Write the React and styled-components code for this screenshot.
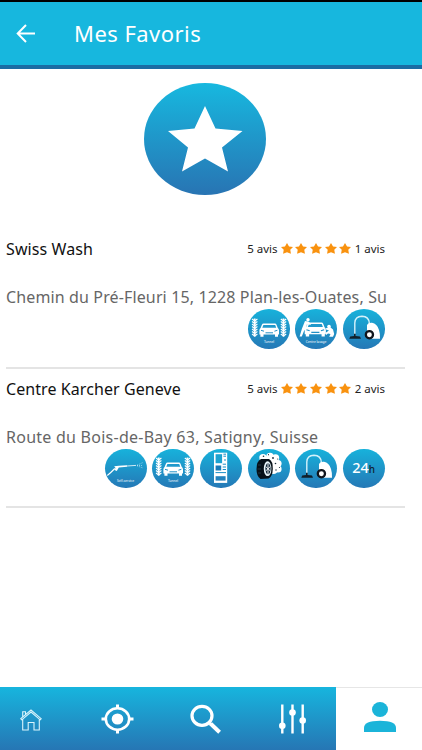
import React from 'react';
import styled, { createGlobalStyle } from 'styled-components';

const STAR = '75.5,35.5 86,58 113,60.5 92.5,77 98.5,101 75.5,88 52.5,101 58.5,77 38.5,60.5 65,58';

const favoris = [
  {
    id: 1,
    name: 'Swiss Wash',
    nameSpacing: 0.1,
    address: 'Chemin du Pré-Fleuri 15, 1228 Plan-les-Ouates, Su',
    addressSpacing: 0.13,
    avis: '1 avis',
    services: ['tunnel', 'lavage', 'aspirateur'],
  },
  {
    id: 2,
    name: 'Centre Karcher Geneve',
    nameSpacing: 0.08,
    address: 'Route du Bois-de-Bay 63, Satigny, Suisse',
    addressSpacing: 0.25,
    avis: '2 avis',
    services: ['self', 'tunnel', 'distributeur', 'pneu', 'aspirateur', 'h24'],
  },
];

function Car() {
  return (
    <g>
      <path d="M14 15.5Q14.4 14.6 15.5 14.6H27Q28 14.6 28.4 15.5L29.8 19Q31 19.8 31 21.5V25.5H30V27.7H27V25.5H15.5V27.7H12.4V25.5H11.4V21.5Q11.4 19.8 12.6 19Z" fill="#fff" />
      <path d="M15.4 16H27.2L28.2 18.8H14.3Z" fill="#2099cb" />
      <path d="M13 21.3L16 22.2M29.4 21.3L26.4 22.2M17.5 23.8H25" stroke="#2390c5" strokeWidth="1" />
    </g>
  );
}

function Brush({ x }) {
  return (
    <g stroke="#fff" fill="none">
      <path d={`M${x} 9.5V27.5`} strokeWidth="1.8" />
      <path
        d={`M${x - 2.7} 10L${x} 12L${x + 2.7} 10M${x - 2.7} 12.5L${x} 14.5L${x + 2.7} 12.5M${x - 2.7} 15L${x} 17L${x + 2.7} 15M${x - 2.7} 17.5L${x} 19.5L${x + 2.7} 17.5M${x - 2.7} 20L${x} 22L${x + 2.7} 20M${x - 2.7} 22.5L${x} 24.5L${x + 2.7} 22.5M${x - 2.7} 25L${x} 27L${x + 2.7} 25`}
        strokeWidth="1.1"
      />
    </g>
  );
}

function ServiceIcon({ type }) {
  switch (type) {
    case 'tunnel':
      return (
        <Drawing viewBox="0 0 42 40">
          <Brush x={6.7} />
          <Car />
          <Brush x={35.5} />
          <Caption x="21" y="34">Tunnel</Caption>
        </Drawing>
      );
    case 'lavage':
      return (
        <Drawing viewBox="0 0 42 40">
          <g transform="translate(-2.6 -2.3) scale(1.08)">
            <Car />
          </g>
          <g fill="#fff">
            <circle cx="13" cy="10.7" r="1.7" />
            <path d="M10 12L13 12.4L16 14.5L15.5 16L12 15L11 19.5L9 22L6.8 27.5H4.6L7 19.5Z" />
            <circle cx="34" cy="17.5" r="1.8" />
            <path d="M35 18L38 20.5L39.2 25L38 27.7H34.2L35.5 25L33 24.5L31 26V23.5L34 21.5L31 20.5V19.2Z" />
          </g>
          <Caption x="21" y="34">Centre lavage</Caption>
        </Drawing>
      );
    case 'aspirateur':
      return (
        <Drawing viewBox="0 0 42 40">
          <path d="M11.8 27V14Q12 7.3 19 7.2Q26 7.3 26.4 14.5" fill="none" stroke="#d5f2fb" strokeWidth="1.4" />
          <path d="M24 16Q25 13.5 29 13.8Q34 14.5 36 21Q37.3 25 37 29.7H29L24 24Z" fill="#fff" />
          <path d="M6.3 29.8L7.2 27.5L11 27V24.8H12.7V27L17 27.5L18 29.8Z" fill="#10202c" />
          <circle cx="26.4" cy="25.7" r="3.6" fill="#fff" stroke="#10151c" strokeWidth="2.3" />
        </Drawing>
      );
    case 'self':
      return (
        <Drawing viewBox="0 0 42 40">
          <path d="M2.3 27.5Q6 24.5 9.8 20.5" fill="none" stroke="#fff" strokeWidth="1.1" />
          <path d="M9.2 18.2L13.8 17.7L22 17.3V18.7L13.8 19.5L11.8 23L9.4 22L10.5 20Z" fill="#fff" />
          <path d="M22 18L31 17.4" stroke="#fff" strokeWidth=".8" />
          <path d="M32 17.2L38 14.5M32 17.5H38M32 17.8L38 20" stroke="#d5f2fb" strokeWidth=".6" strokeDasharray="1 1" />
          <Caption x="20.5" y="33.7">Self-service</Caption>
        </Drawing>
      );
    case 'distributeur':
      return (
        <Drawing viewBox="0 0 42 40">
          <rect x="14" y="4.7" width="13.2" height="30.2" fill="#fff" />
          <rect x="15.6" y="6.2" width="6.5" height="9" fill="#1da3d1" />
          <rect x="15.6" y="17.5" width="5.6" height="5" fill="#197bb8" />
          <path d="M23.4 6.2H26M23.4 8.2H26M24 12H26M22.7 16.2H26M22.7 19H26M22.7 21.5H26M15.5 24.6H26" stroke="#1b8fc7" strokeWidth="1" />
          <rect x="15.6" y="28.2" width="10" height="4.4" fill="#2482bd" />
        </Drawing>
      );
    case 'pneu':
      return (
        <Drawing viewBox="0 0 42 40">
          <g fill="#fff">
            <circle cx="15" cy="9.8" r="3.7" />
            <circle cx="22" cy="8.5" r="3.7" />
            <circle cx="27.5" cy="10" r="3.7" />
            <circle cx="30" cy="15.5" r="3.6" />
            <circle cx="30" cy="21" r="3.6" />
            <circle cx="25.5" cy="21.5" r="4.5" />
            <circle cx="22" cy="14" r="7" />
          </g>
          <path d="M13 11H21Q25 13 24.8 21Q24.5 29 20.5 30.5L12.5 31Q8.5 28.5 8.5 21Q8.6 13 13 11Z" fill="#071018" />
          <ellipse cx="19.6" cy="20.7" rx="3.8" ry="7.4" fill="#e9f6fb" />
          <ellipse cx="20" cy="20.7" rx="2.6" ry="5.6" fill="#13293a" />
          <path d="M20 15V26.5M17.6 18.5L22.4 23M17.6 23L22.4 18.5" stroke="#fff" strokeWidth=".9" />
          <path d="M10 17H13M9.5 21H13M10 25H13" stroke="#34505f" strokeWidth=".6" />
          <g fill="#172b38">
            <circle cx="15.5" cy="8.3" r=".8" />
            <circle cx="20.5" cy="6.7" r=".6" />
            <circle cx="25" cy="10" r=".9" />
            <circle cx="29.7" cy="11" r=".6" />
            <circle cx="27.5" cy="15.5" r=".8" />
            <circle cx="31.5" cy="19.5" r=".6" />
            <circle cx="28" cy="22" r=".7" />
          </g>
        </Drawing>
      );
    default:
      return <Hours>24<small>h</small></Hours>;
  }
}

function Stars() {
  return (
    <StarRow>
      {[0, 1, 2, 3, 4].map((i) => (
        <svg key={i} width="12" height="11" viewBox="0 0 22 22" preserveAspectRatio="none">
          <path d="M11 0L14.7 6.8L22 8.2L17 13.7L18.2 21.5L11 18.3L3.8 21.5L5 13.7L0 8.2L7.3 6.8Z" fill="#f9920f" />
        </svg>
      ))}
    </StarRow>
  );
}

function Favori({ item }) {
  return (
    <Item>
      <ItemHead>
        <Line $color="#111" $spacing={item.nameSpacing}>{item.name}</Line>
        <Rating>
          <span>5 avis</span>
          <Stars />
          <span>{item.avis}</span>
        </Rating>
      </ItemHead>
      <Line $color="#666" $spacing={item.addressSpacing}>{item.address}</Line>
      <Services>
        {item.services.map((type) => (
          <Badge key={type}>
            <ServiceIcon type={type} />
          </Badge>
        ))}
      </Services>
    </Item>
  );
}

function App() {
  return (
    <Screen>
      <GlobalStyle />
      <Header>
        <svg width="20" height="19" viewBox="0 0 20 19" fill="none" stroke="#fff" strokeWidth="2">
          <path d="M19 9.5H2M10 1L1.7 9.5L10 18" />
        </svg>
        <Title>Mes Favoris</Title>
      </Header>
      <Main>
        <Hero>
          <svg width="122" height="113" viewBox="14.5 12.5 122 113">
            <polygon points={STAR} fill="#fff" />
          </svg>
        </Hero>
        <List>
          {favoris.map((item) => (
            <Favori key={item.id} item={item} />
          ))}
        </List>
      </Main>
      <Nav>
        <NavBlue>
          <Tab>
            <svg width="22" height="22" viewBox="0 0 22 22" fill="none" stroke="#d9f4fc" strokeWidth="1.1">
              <path d="M.8 9.7L11 1L21.2 9.7L20.2 10.8L11 3L1.8 10.8ZM2.7 10.2V21H8.2V13.5H14V21H19.3V10.2M2.7 7.8V2.8H5.5V5.5" />
            </svg>
          </Tab>
          <Tab>
            <svg width="33" height="30" viewBox="0 0 33 30" fill="none" stroke="#fff" strokeWidth="2.6">
              <ellipse cx="16.5" cy="15" rx="11.7" ry="10.7" />
              <ellipse cx="16.5" cy="15" rx="5.8" ry="5.5" fill="#fff" stroke="none" />
              <path d="M16.5 .5V4.5M16.5 25.5V29.5M.5 15H5M28 15H32.5" strokeWidth="3" />
            </svg>
          </Tab>
          <Tab>
            <svg width="31" height="30" viewBox="0 0 31 30" fill="none" stroke="#fff">
              <ellipse cx="12" cy="11.8" rx="10" ry="9.5" strokeWidth="3.2" />
              <path d="M18.5 18L21 20.5" strokeWidth="3" />
              <path d="M20.7 19.8L29.6 28.3" strokeWidth="4" />
            </svg>
          </Tab>
          <Tab>
            <svg width="27" height="30" viewBox="0 0 27 30" fill="#fff" stroke="#fff" strokeWidth="2.4">
              <path d="M3.3 .5V29.5M13.5 .5V29.5M23.7 .5V29.5" />
              <g stroke="none">
                <circle cx="3.3" cy="21.7" r="3.3" />
                <circle cx="13.5" cy="8.5" r="3.3" />
                <circle cx="23.7" cy="16.5" r="3.3" />
              </g>
            </svg>
          </Tab>
        </NavBlue>
        <ActiveTab>
          <svg width="32" height="30" viewBox="0 0 32 30" fill="#1bb4d9">
            <ellipse cx="16" cy="7.5" rx="8" ry="7.4" />
            <path d="M0 30V26Q0 18.7 16 18.7Q32 18.7 32 26V30Z" />
          </svg>
        </ActiveTab>
      </Nav>
    </Screen>
  );
}

export default App;

const GlobalStyle = createGlobalStyle`
  * {
    box-sizing: border-box;
  }
  body {
    margin: 0;
    background: #fff;
  }
`;

const Screen = styled.div`
  width: 422px;
  height: 750px;
  display: flex;
  flex-direction: column;
  overflow: hidden;
  background: #fff;
  font-family: 'Noto Sans', 'Open Sans', sans-serif;
`;

const Header = styled.header`
  height: 69px;
  flex-shrink: 0;
  display: flex;
  align-items: center;
  gap: 38px;
  padding-left: 16px;
  background: #17b7de;
  border-top: 2px solid #000;
  border-bottom: 4px solid #1b6ca3;
`;

const Title = styled.h1`
  margin: 0;
  padding-bottom: 2px;
  color: #fff;
  font-size: 22px;
  font-weight: 400;
  line-height: 30px;
  letter-spacing: 0.45px;
`;

const Main = styled.main`
  flex: 1;
  padding: 13.5px 17px 0 6px;
`;

const Hero = styled.div`
  width: 122px;
  height: 112.5px;
  margin-left: 138.4px;
  border-radius: 50%;
  overflow: hidden;
  background: linear-gradient(#17b8df, #2874b3);

  svg {
    display: block;
  }
`;

const List = styled.div`
  padding-top: 34px;
`;

const Item = styled.section`
  height: 139.5px;
  padding-top: 9px;
  border-bottom: 2px solid #e4e4e4;
`;

const ItemHead = styled.div`
  height: 48px;
  display: flex;
  align-items: flex-start;
  justify-content: space-between;
  padding-right: 20px;
`;

const Line = styled.div`
  color: ${(props) => props.$color};
  font-size: 16px;
  line-height: 22px;
  letter-spacing: ${(props) => props.$spacing}px;
  white-space: nowrap;
`;

const Rating = styled.div`
  display: flex;
  align-items: center;
  gap: 3.2px;
  color: #222;
  font-size: 11.5px;
  line-height: 21px;
  white-space: nowrap;
`;

const StarRow = styled.div`
  display: flex;
  gap: 2.7px;

  svg {
    display: block;
  }
`;

const Services = styled.div`
  display: flex;
  justify-content: flex-end;
  gap: 5.6px;
  padding-right: 20.3px;
  margin-top: 1px;
`;

const Badge = styled.div`
  width: 42px;
  height: 39.5px;
  display: flex;
  align-items: center;
  justify-content: center;
  border-radius: 50%;
  overflow: hidden;
  background: linear-gradient(#17b2db, #2578b6);
`;

const Drawing = styled.svg`
  width: 42px;
  height: 40px;
  flex-shrink: 0;
`;

const Caption = styled.text`
  fill: #fff;
  font-size: 3.2px;
  text-anchor: middle;
`;

const Hours = styled.div`
  display: flex;
  align-items: baseline;
  color: #fff;
  font-size: 14.5px;
  font-weight: 500;
  line-height: 20px;

  small {
    color: #11222f;
    font-size: 10px;
    font-weight: 500;
  }
`;

const Nav = styled.nav`
  height: 63px;
  flex-shrink: 0;
  display: flex;
`;

const NavBlue = styled.div`
  width: 336.4px;
  display: flex;
  background: linear-gradient(#17b5de, #2676b4);
`;

const Tab = styled.div`
  width: 87.5px;
  display: flex;
  flex-shrink: 0;
  align-items: center;
  justify-content: center;
  padding-top: 1px;

  &:first-child {
    width: 61px;
    margin-right: 13px;
    padding-top: 3px;
  }
`;

const ActiveTab = styled.div`
  flex: 1;
  display: flex;
  align-items: center;
  justify-content: center;
  padding: 0 0 4px 2px;
  border-top: 1px solid #e6e6e6;
`;
